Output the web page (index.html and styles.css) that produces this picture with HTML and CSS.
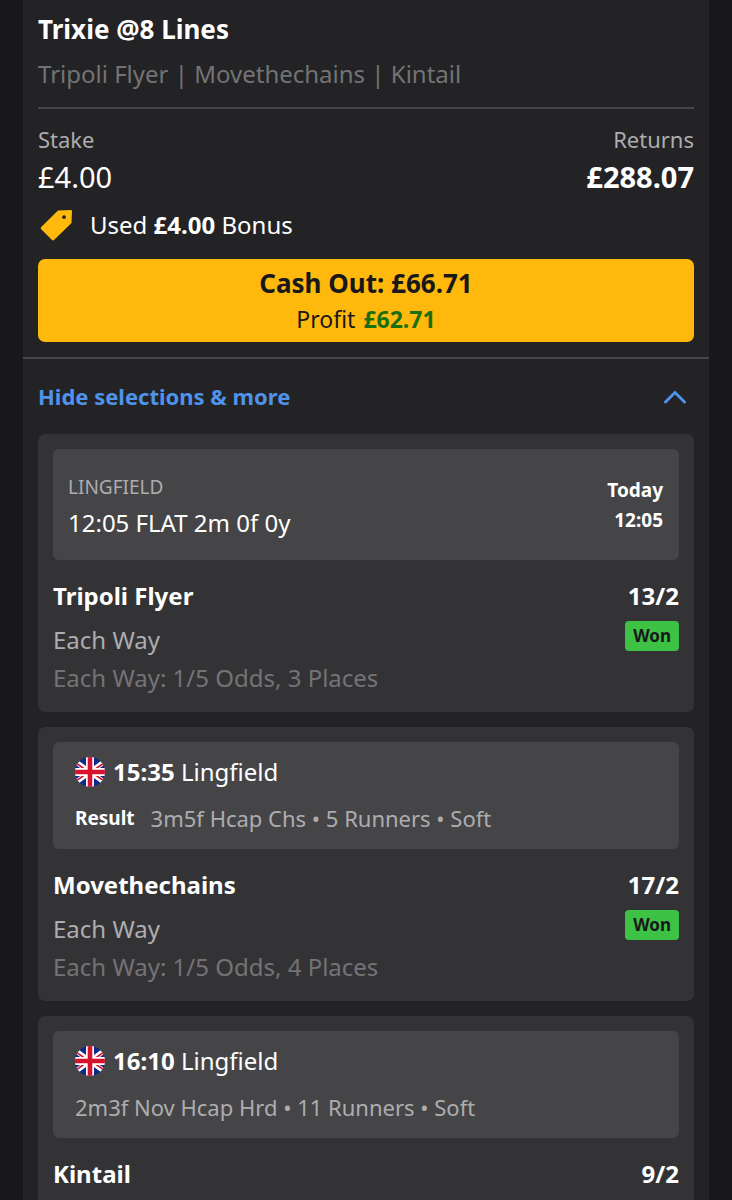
FILE: index.html
```html
<!DOCTYPE html>
<html lang="en">
<head>
  <meta charset="UTF-8">
  <meta name="viewport" content="width=device-width, initial-scale=1">
  <title>My Bets</title>
  <link rel="stylesheet" href="styles.css">
</head>
<body>

<!-- Flag shared by the race headers -->
<svg class="sprite" aria-hidden="true">
  <symbol id="flag-uk" viewBox="0 0 30 30">
    <clipPath id="flag-round"><circle cx="15" cy="15" r="15"/></clipPath>
    <g clip-path="url(#flag-round)">
      <rect width="30" height="30" fill="#0a2a8c"/>
      <path d="M-3 2 L33 28 M33 2 L-3 28" stroke="#fff" stroke-width="5"/>
      <path d="M-3 3 L15 16 M33 27 L15 14 M33 3 L15 16 M-3 27 L15 14" stroke="#d8122d" stroke-width="1.600"/>
      <path d="M15 0 V30 M0 15 H30" stroke="#fff" stroke-width="8"/>
      <path d="M15 0 V30 M0 15 H30" stroke="#d8122d" stroke-width="4.600"/>
    </g>
  </symbol>
</svg>

<main class="bet">
  <header class="bet-header">
    <h1 class="bet-title">Trixie @8 Lines</h1>
    <p class="bet-subtitle">Tripoli Flyer | Movethechains | Kintail</p>
  </header>

  <section class="bet-summary">
    <div class="amounts">
      <div class="amount">
        <span class="amount-label">Stake</span>
        <span class="amount-value">£4.00</span>
      </div>
      <div class="amount amount-returns">
        <span class="amount-label">Returns</span>
        <span class="amount-value">£288.07</span>
      </div>
    </div>

    <div class="bonus">
      <svg class="bonus-icon" viewBox="0 0 36 32" aria-hidden="true">
        <path fill="#ffb80c" fill-rule="evenodd" d="M20 1.500 L33 1 Q34 1 34 2 L33.500 14 L16 31 Q15 31.800 14 31 L3 20 Q2.300 19 3.200 18 Z M26 6.200 a1.900 1.900 0 1 0 0.010 0 Z"/>
      </svg>
      <span>Used <b>£4.00</b> Bonus</span>
    </div>

    <button class="cashout" type="button">
      <span class="cashout-amount">Cash Out: £66.71</span>
      <span class="cashout-profit">Profit <b>£62.71</b></span>
    </button>
  </section>

  <button class="toggle" type="button" aria-expanded="true" aria-controls="selections">
    <span>Hide selections &amp; more</span>
    <svg class="toggle-icon" viewBox="0 0 24 16" aria-hidden="true">
      <path d="M2.500 14 L12 4.500 L21.500 14" fill="none" stroke="#4f93ea" stroke-width="3" stroke-linecap="round"/>
    </svg>
  </button>

  <section class="selections" id="selections">
    <article class="card">
      <div class="event">
        <div>
          <div class="event-venue">LINGFIELD</div>
          <div class="event-name">12:05 FLAT 2m 0f 0y</div>
        </div>
        <div class="event-time">
          <div>Today</div>
          <div>12:05</div>
        </div>
      </div>
      <div class="pick">
        <div>
          <h2 class="pick-name">Tripoli Flyer</h2>
          <p class="pick-market">Each Way</p>
          <p class="pick-terms">Each Way: 1/5 Odds, 3 Places</p>
        </div>
        <div class="pick-side">
          <span class="odds">13/2</span>
          <span class="badge">Won</span>
        </div>
      </div>
    </article>

    <article class="card">
      <div class="race">
        <div class="race-title">
          <svg class="flag" aria-hidden="true"><use href="#flag-uk"/></svg>
          <span><b>15:35</b> Lingfield</span>
        </div>
        <div class="race-info">
          <b class="race-status">Result</b>
          <span>3m5f Hcap Chs • 5 Runners • Soft</span>
        </div>
      </div>
      <div class="pick">
        <div>
          <h2 class="pick-name">Movethechains</h2>
          <p class="pick-market">Each Way</p>
          <p class="pick-terms">Each Way: 1/5 Odds, 4 Places</p>
        </div>
        <div class="pick-side">
          <span class="odds">17/2</span>
          <span class="badge">Won</span>
        </div>
      </div>
    </article>

    <article class="card card-last">
      <div class="race">
        <div class="race-title">
          <svg class="flag" aria-hidden="true"><use href="#flag-uk"/></svg>
          <span><b>16:10</b> Lingfield</span>
        </div>
        <div class="race-info">
          <span>2m3f Nov Hcap Hrd • 11 Runners • Soft</span>
        </div>
      </div>
      <div class="pick">
        <h2 class="pick-name">Kintail</h2>
        <span class="odds">9/2</span>
      </div>
    </article>
  </section>
</main>

</body>
</html>
```
FILE: styles.css
```css
* {
  box-sizing: border-box;
}

body {
  margin: 0;
  padding: 0 23px;
  background: #18181a;
  color: #fff;
  font-family: "Noto Sans", sans-serif;
  font-size: 24px;
}

h1, h2, p {
  margin: 0;
}

button {
  font-family: inherit;
  border: 0;
  cursor: pointer;
}

.sprite {
  position: absolute;
  width: 0;
  height: 0;
}

.bet {
  display: flex;
  flex-direction: column;
  min-height: 100vh;
  background: #232325;
}

/* Header */
.bet-header {
  margin: 0 15px;
  padding: 9px 0 13px;
  border-bottom: 2px solid #454547;
}

.bet-title {
  font-size: 26px;
  line-height: 40px;
}

.bet-subtitle {
  margin-top: 5px;
  color: #737375;
  line-height: 40px;
}

/* Stake, returns and cash out */
.bet-summary {
  padding: 11px 15px 15px;
  border-bottom: 2px solid #454547;
}

.amounts {
  display: flex;
  justify-content: space-between;
}

.amount {
  display: flex;
  flex-direction: column;
  line-height: 38px;
}

.amount-label {
  color: #adadaf;
  font-size: 22px;
}

.amount-value {
  font-size: 29px;
}

.amount-returns {
  text-align: right;
}

.amount-returns .amount-value {
  font-weight: bold;
}

.bonus {
  display: flex;
  align-items: center;
  gap: 16px;
  margin-top: 13px;
  line-height: 32px;
}

.bonus-icon {
  width: 36px;
  height: 32px;
}

.cashout {
  display: flex;
  flex-direction: column;
  align-items: center;
  width: 100%;
  margin-top: 18px;
  padding: 6px 15px 5px;
  border-radius: 7px;
  background: #ffb80c;
  color: #18181a;
  line-height: 36px;
}

.cashout-amount {
  font-size: 26px;
  font-weight: bold;
}

.cashout-profit {
  display: flex;
  gap: 8px;
  font-size: 23px;
}

.cashout-profit b {
  color: #1a7010;
}

.toggle {
  display: flex;
  align-items: center;
  justify-content: space-between;
  padding: 18px 22px 19px 15px;
  background: none;
  color: #4f93ea;
  font-size: 22px;
  font-weight: bold;
  line-height: 38px;
}

.toggle-icon {
  width: 24px;
  height: 16px;
}

/* Selections */
.selections {
  display: flex;
  flex: 1;
  flex-direction: column;
  gap: 15px;
  padding: 0 15px;
}

.card {
  padding: 15px;
  border-radius: 7px;
  background: #333335;
}

.card-last {
  flex: 1;
  padding-bottom: 0;
  border-radius: 7px 7px 0 0;
}

.event,
.race {
  border-radius: 6px;
  background: #454547;
}

.event {
  display: flex;
  align-items: center;
  justify-content: space-between;
  padding: 20px 16px 19px 15px;
  line-height: 36px;
}

.event-venue {
  color: #adadaf;
  font-size: 19px;
}

.event-time {
  font-size: 19px;
  font-weight: bold;
  line-height: 30px;
  text-align: right;
}

.race {
  padding: 12px 22px 13px;
  line-height: 36px;
}

.race-title {
  display: flex;
  align-items: center;
  gap: 8px;
}

.flag {
  width: 30px;
  height: 30px;
}

.race-info {
  display: flex;
  gap: 16px;
  margin-top: 10px;
  color: #adadaf;
  font-size: 22px;
}

.race-status {
  color: #fff;
  font-size: 19px;
}

.pick {
  display: flex;
  justify-content: space-between;
  padding-top: 15px;
}

.pick-name,
.odds {
  font-size: 24px;
  font-weight: bold;
  line-height: 42px;
}

.pick-market,
.pick-terms {
  line-height: 38px;
}

.pick-market {
  margin-top: 4px;
  color: #adadaf;
}

.pick-terms {
  color: #737375;
}

.pick-side {
  display: flex;
  flex-direction: column;
  align-items: flex-end;
  gap: 4px;
}

.badge {
  padding: 0 8px;
  border-radius: 4px;
  background: #3ec246;
  color: #18181a;
  font-size: 17px;
  font-weight: bold;
  line-height: 30px;
}
```
